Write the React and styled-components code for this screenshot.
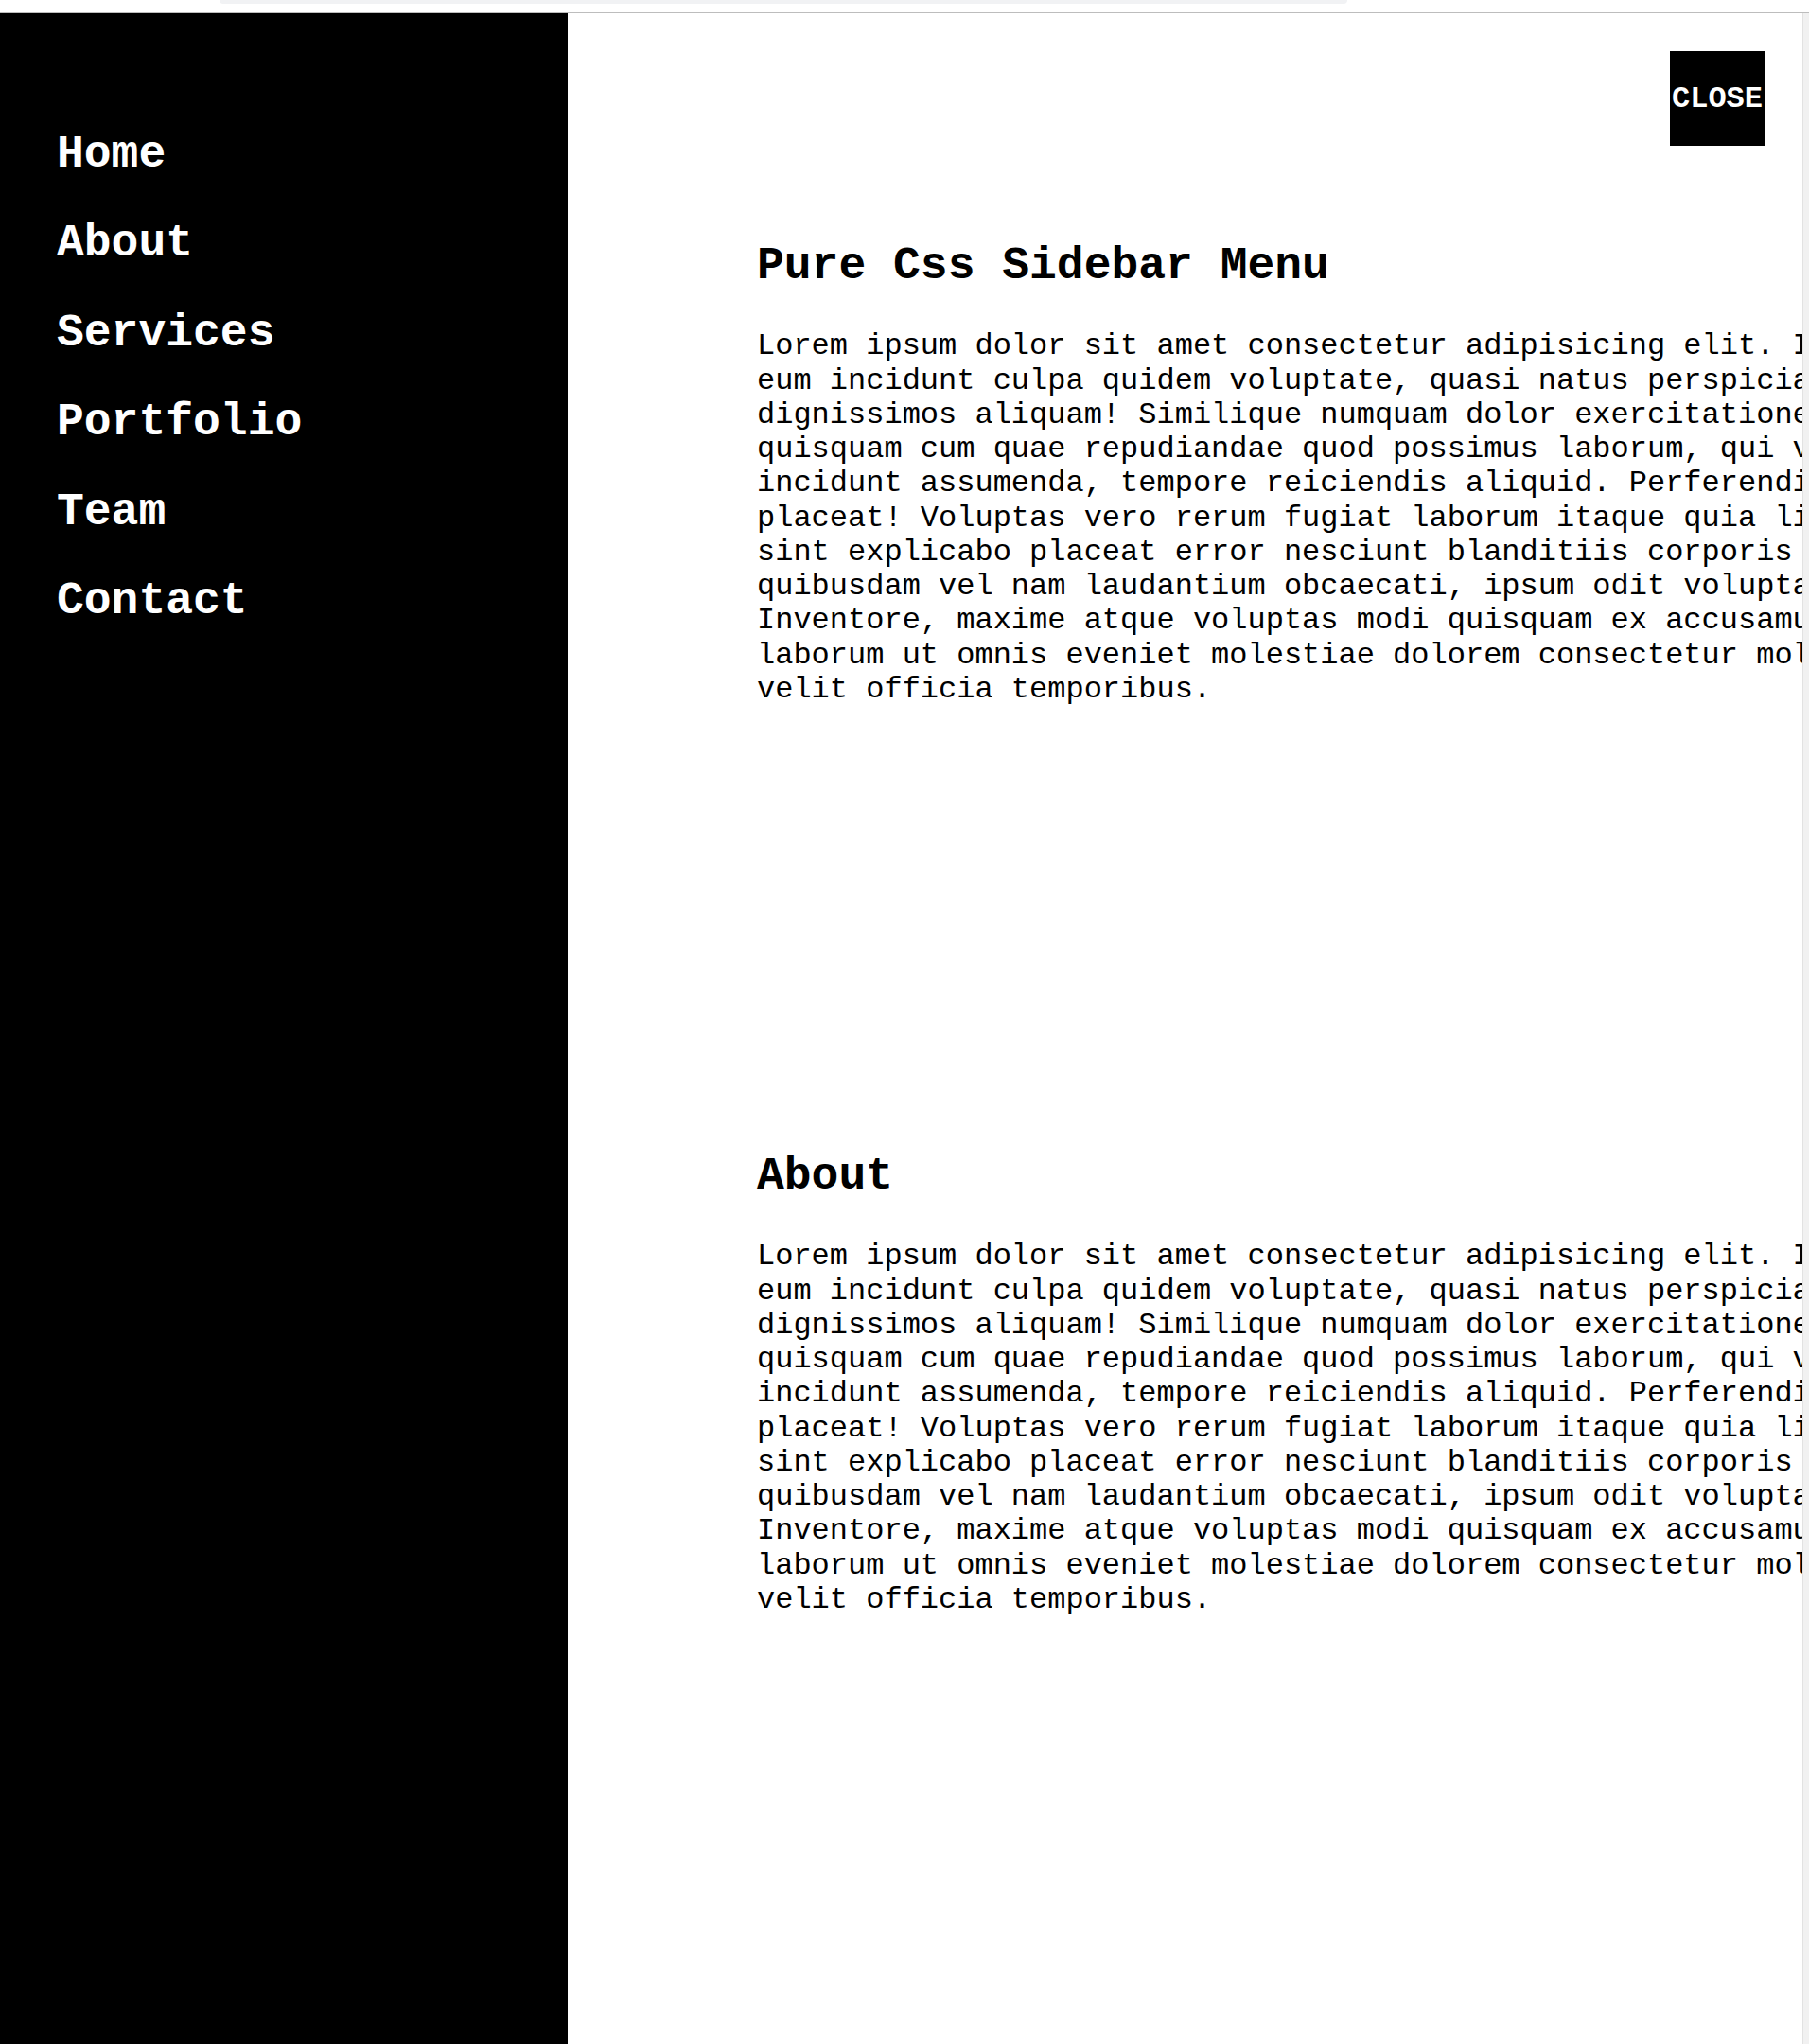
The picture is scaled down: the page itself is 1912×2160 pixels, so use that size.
import React from 'react'
import styled, { createGlobalStyle } from 'styled-components'

const GlobalStyle = createGlobalStyle`
  * {
    box-sizing: border-box;
  }

  html, body {
    margin: 0;
    padding: 0;
    background: #fff;
  }

  body {
    font-family: "Courier New", "Liberation Mono", monospace;
    line-height: 1.133;
    color: #000;
    overflow: hidden;
  }
`

const Page = styled.div`
  height: 2160px;
  display: flex;
  flex-direction: column;
  background: #fff;
`

// thin strip of browser chrome left at the top of the shot
const TopEdge = styled.div`
  height: 14px;
  flex-shrink: 0;
  padding-left: 232px;
  border-bottom: 1px solid #bdbdbd;
  background: #fff;
`

const TabGhost = styled.div`
  width: 1192px;
  height: 4px;
  background: #f1f2f4;
  border-radius: 0 0 12px 12px;
`

const Frame = styled.div`
  flex: 1;
  display: flex;
  min-height: 0;
`

const Viewport = styled.div`
  flex: 1;
  display: flex;
  position: relative;
  overflow: hidden;
`

const Scrollbar = styled.div`
  width: 7px;
  flex-shrink: 0;
  background: #f1f1f1;
  border-left: 1px solid #e2e2e2;
`

const Sidebar = styled.nav`
  width: 600px;
  flex-shrink: 0;
  background: #000;
  padding: 122px 0 0 60px;
`

const NavList = styled.ul`
  list-style: none;
  margin: 0;
  padding: 0;
  display: flex;
  flex-direction: column;
  gap: 40px;
`

const NavLink = styled.a`
  display: block;
  color: #fff;
  font-size: 48px;
  font-weight: bold;
  text-decoration: none;
`

const CloseButton = styled.button`
  position: absolute;
  top: 40px;
  right: 40px;
  width: 100px;
  height: 100px;
  padding: 0;
  border: 0;
  background: #000;
  color: #fff;
  font-family: "Courier New", "Liberation Mono", monospace;
  font-size: 32px;
  font-weight: bold;
  display: flex;
  align-items: center;
  justify-content: center;
  cursor: pointer;
`

const Main = styled.main`
  width: 1906px;
  flex-shrink: 0;
  padding: 240px 200px 0;
`

const Section = styled.section`
  min-height: 962px;
`

const Heading = styled.h1`
  margin: 0 0 40px;
  font-size: 48px;
  font-weight: bold;
`

const Text = styled.p`
  margin: 0;
  font-size: 32px;
`

const links = ['Home', 'About', 'Services', 'Portfolio', 'Team', 'Contact']

const lorem =
  'Lorem ipsum dolor sit amet consectetur adipisicing elit. Iusto, sapiente unde ' +
  'eum incidunt culpa quidem voluptate, quasi natus perspiciatis nobis officiis ' +
  'dignissimos aliquam! Similique numquam dolor exercitationem dolores eos ipsa ' +
  'quisquam cum quae repudiandae quod possimus laborum, qui voluptatum nemo sunt ' +
  'incidunt assumenda, tempore reiciendis aliquid. Perferendis iusto quidem ' +
  'placeat! Voluptas vero rerum fugiat laborum itaque quia libero ducimus illo ' +
  'sint explicabo placeat error nesciunt blanditiis corporis nostrum ipsam aut ' +
  'quibusdam vel nam laudantium obcaecati, ipsum odit voluptatibus eius rem. ' +
  'Inventore, maxime atque voluptas modi quisquam ex accusamus nisi harum quos ' +
  'laborum ut omnis eveniet molestiae dolorem consectetur mollitia quas sequi ' +
  'velit officia temporibus.'

const sections = [
  { id: 'home', title: 'Pure Css Sidebar Menu' },
  { id: 'about', title: 'About' },
]

const App = () => {
  return (
    <>
      <GlobalStyle />
      <Page>
        <TopEdge>
          <TabGhost />
        </TopEdge>
        <Frame>
          <Viewport>
            <Sidebar>
              <NavList>
                {links.map((item) => (
                  <li key={item}>
                    <NavLink href={`#${item.toLowerCase()}`}>{item}</NavLink>
                  </li>
                ))}
              </NavList>
            </Sidebar>
            <Main>
              {sections.map((s) => (
                <Section key={s.id} id={s.id}>
                  <Heading>{s.title}</Heading>
                  <Text>{lorem}</Text>
                </Section>
              ))}
            </Main>
            <CloseButton>CLOSE</CloseButton>
          </Viewport>
          <Scrollbar />
        </Frame>
      </Page>
    </>
  )
}

export default App
